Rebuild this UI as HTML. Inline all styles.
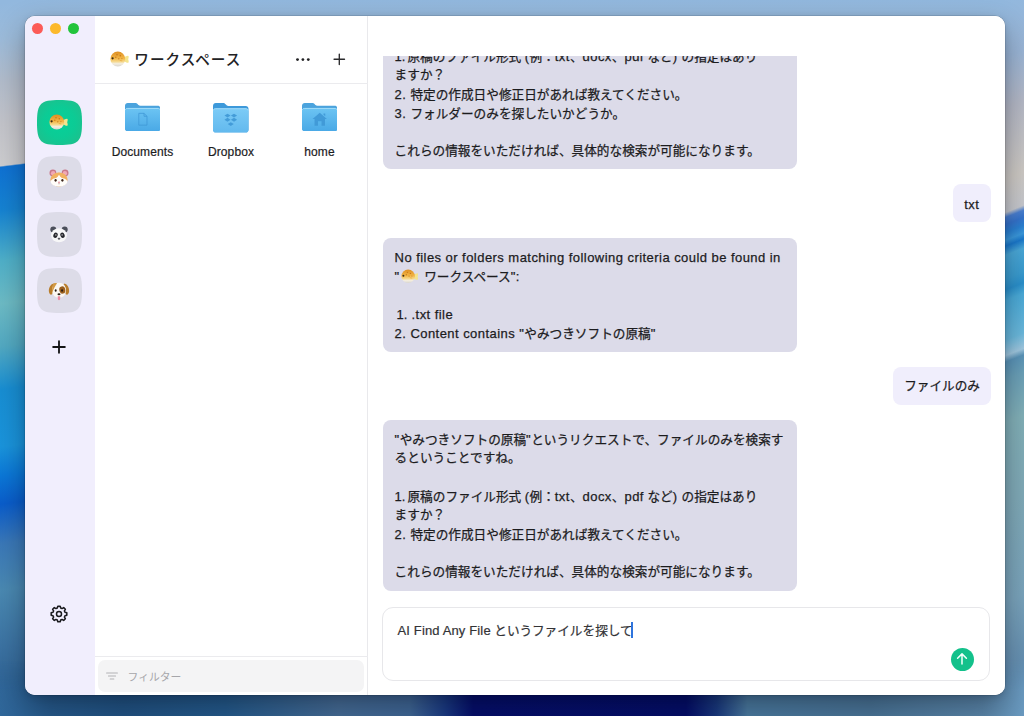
<!DOCTYPE html>
<html lang="ja">
<head>
<meta charset="utf-8">
<title>ワークスペース</title>
<style>
html,body{margin:0;padding:0;}
body{width:1024px;height:716px;overflow:hidden;position:relative;background:#3a6a98;
  font-family:"Liberation Sans","Noto Sans CJK JP",sans-serif;color:#1c1c1e;}
#wall{position:absolute;left:0;top:0;width:1024px;height:716px;display:block;}
#win{position:absolute;left:25px;top:16px;width:980px;height:679px;border-radius:10px;background:#fff;
  box-shadow:0 0 0 0.5px rgba(0,0,0,.18),0 12px 30px rgba(0,0,10,.32),0 2px 7px rgba(0,0,20,.13);overflow:hidden;}
#side{position:absolute;left:0;top:0;width:69.5px;height:679px;background:#f1eefd;}
.tl{position:absolute;top:6.5px;width:11.2px;height:11.2px;border-radius:50%;}
.wsb{position:absolute;left:11.5px;width:45px;height:45px;}
.wsb .sq{position:absolute;left:0;top:0;width:45px;height:45px;}
.wsb .emo{position:absolute;}
#panel{position:absolute;left:69.5px;top:0;width:272.5px;height:679px;background:#fff;border-right:1px solid #e9e9ec;}
#phead{position:absolute;left:0;top:0;width:273px;height:67px;border-bottom:1px solid #ebebee;}
#ptitle{position:absolute;left:39.8px;top:33.2px;font-size:14.6px;line-height:22px;font-weight:500;color:#222224;white-space:nowrap;letter-spacing:1px;}
.fold{position:absolute;top:87.4px;width:80px;text-align:center;}
.fold svg{display:block;margin:0 auto;width:35.5px;height:28.6px;}
.fold span{display:block;margin-top:13.1px;font-size:12px;line-height:14px;color:#1c1c1e;-webkit-text-stroke:0.2px #1c1c1e;white-space:nowrap;letter-spacing:.1px;}
#filter{position:absolute;left:3.6px;top:643.6px;width:266px;height:32.8px;border-radius:7px;background:#f4f4f5;}
#filter span{position:absolute;left:29.5px;top:9px;font-size:10.8px;line-height:16px;color:#a6a6aa;}
#fline{position:absolute;left:0;top:639.5px;width:273px;height:1px;background:#ebebee;}
#chat{position:absolute;left:343px;top:0;width:637px;height:679px;background:#fff;}
#scroll{position:absolute;left:0;top:39.5px;width:637px;height:551.5px;overflow:hidden;}
.ab{position:absolute;left:14.8px;width:414px;box-sizing:border-box;padding:10px 12px 8.5px 11.8px;border-radius:8px;background:#dcdbe9;
  font-size:12.65px;line-height:19px;color:#1c1c1e;white-space:nowrap;-webkit-text-stroke:.25px #1c1c1e;}
.ub{position:absolute;right:14.4px;box-sizing:border-box;height:38.2px;padding:10.5px 10.6px 0 10.8px;border-radius:8px;background:#f0eefc;
  font-size:12.65px;line-height:19px;color:#1c1c1e;white-space:nowrap;-webkit-text-stroke:.25px #1c1c1e;}
.ab div,.ub div{height:19px;}
#input{position:absolute;left:14.3px;top:590.5px;width:607.4px;height:74px;border:1px solid #e7e7ea;border-radius:11px;background:#fff;box-sizing:border-box;}
#itext{position:absolute;left:14.2px;top:13.6px;font-size:12.65px;line-height:19px;color:#333336;white-space:nowrap;-webkit-text-stroke:.2px #333336;}
#caret{position:absolute;left:248.2px;top:14.8px;width:1.5px;height:16px;background:#2f74dd;}
#send{position:absolute;left:567.5px;top:40.1px;width:23.4px;height:23.4px;border-radius:50%;background:#13c18b;}
.l{font-size:13px;letter-spacing:.45px;}
.n{font-size:13px;letter-spacing:0;word-spacing:-1.6px;}
.l2{font-size:13px;letter-spacing:.14px;}
.em{display:inline-block;vertical-align:-2.5px;width:17.4px;height:14.6px;margin:0 2.6px 0 1px;}
</style>
</head>
<body>
<svg id="wall" viewBox="0 0 1024 716" aria-hidden="true">
  <defs>
    <linearGradient id="gl" x1="0" y1="0" x2="0" y2="716" gradientUnits="userSpaceOnUse" gradientTransform="matrix(1 -0.12 0 1 0 3)">
      <stop offset="0" stop-color="#92b8de"/>
      <stop offset="0.05" stop-color="#9cbbda"/>
      <stop offset="0.11" stop-color="#b2bccb"/>
      <stop offset="0.17" stop-color="#c3c4ca"/>
      <stop offset="0.2275" stop-color="#cdcdd0"/>
      <stop offset="0.2295" stop-color="#0f72d4"/>
      <stop offset="0.29" stop-color="#1683d2"/>
      <stop offset="0.36" stop-color="#4fb0c9"/>
      <stop offset="0.42" stop-color="#6dbbc5"/>
      <stop offset="0.48" stop-color="#52a9c2"/>
      <stop offset="0.54" stop-color="#188ed3"/>
      <stop offset="0.62" stop-color="#1a94dc"/>
      <stop offset="0.66" stop-color="#0b78d8"/>
      <stop offset="0.70" stop-color="#0a5dcb"/>
      <stop offset="0.755" stop-color="#3a78b8"/>
      <stop offset="0.82" stop-color="#4a89b2"/>
      <stop offset="0.90" stop-color="#3b72a2"/>
      <stop offset="1" stop-color="#285888"/>
    </linearGradient>
    <linearGradient id="gr" x1="0" y1="0" x2="0" y2="716" gradientUnits="userSpaceOnUse" gradientTransform="matrix(1 -0.4 0 1 0 402)">
      <stop offset="0" stop-color="#92b8de"/>
      <stop offset="0.08" stop-color="#9ab5d6"/>
      <stop offset="0.15" stop-color="#b4b8c6"/>
      <stop offset="0.25" stop-color="#cdc9c4"/>
      <stop offset="0.297" stop-color="#c6c8ce"/>
      <stop offset="0.304" stop-color="#4a7fd0"/>
      <stop offset="0.314" stop-color="#3573cc"/>
      <stop offset="0.325" stop-color="#2a80d2"/>
      <stop offset="0.336" stop-color="#3a98dc"/>
      <stop offset="0.344" stop-color="#1a78cc"/>
      <stop offset="0.357" stop-color="#4aa8d8"/>
      <stop offset="0.39" stop-color="#3a9cd0"/>
      <stop offset="0.405" stop-color="#2a90cc"/>
      <stop offset="0.42" stop-color="#4aaad8"/>
      <stop offset="0.475" stop-color="#6ab8dc"/>
      <stop offset="0.497" stop-color="#a0c8e0"/>
      <stop offset="0.506" stop-color="#5a94b8"/>
      <stop offset="0.53" stop-color="#6aa0b8"/>
      <stop offset="0.59" stop-color="#82b0b8"/>
      <stop offset="0.70" stop-color="#80aab8"/>
      <stop offset="0.84" stop-color="#7aa4bc"/>
      <stop offset="0.91" stop-color="#6a94b4"/>
      <stop offset="1" stop-color="#5a88b0"/>
    </linearGradient>
    <linearGradient id="gb" x1="0" y1="0" x2="1024" y2="0" gradientUnits="userSpaceOnUse">
      <stop offset="0" stop-color="#30679a"/>
      <stop offset="0.05" stop-color="#265a8c"/>
      <stop offset="0.12" stop-color="#215384"/>
      <stop offset="0.22" stop-color="#245a8c"/>
      <stop offset="0.33" stop-color="#456c96"/>
      <stop offset="0.40" stop-color="#3f6796"/>
      <stop offset="0.435" stop-color="#1a3a84"/>
      <stop offset="0.462" stop-color="#050f6c"/>
      <stop offset="0.67" stop-color="#040e6a"/>
      <stop offset="0.70" stop-color="#1a3a80"/>
      <stop offset="0.73" stop-color="#4a7aa0"/>
      <stop offset="0.85" stop-color="#4a7598"/>
      <stop offset="0.96" stop-color="#5a86aa"/>
      <stop offset="1" stop-color="#6a9ac0"/>
    </linearGradient>
    <linearGradient id="gt" x1="0" y1="0" x2="0" y2="716" gradientUnits="userSpaceOnUse"><stop offset="0" stop-color="#92b8de"/><stop offset="0.05" stop-color="#9cbbda"/><stop offset="1" stop-color="#9cbbda"/></linearGradient>
    <linearGradient id="gbm" x1="0" y1="660" x2="0" y2="716" gradientUnits="userSpaceOnUse">
      <stop offset="0" stop-color="#fff" stop-opacity="0"/>
      <stop offset="0.55" stop-color="#fff" stop-opacity="1"/>
      <stop offset="1" stop-color="#fff" stop-opacity="1"/>
    </linearGradient>
    <mask id="mb"><rect x="0" y="640" width="1024" height="76" fill="url(#gbm)"/></mask>
  </defs>
  <rect x="0" y="0" width="1024" height="716" fill="url(#gt)"/>
  <rect x="0" y="0" width="60" height="716" fill="url(#gl)"/>
  <rect x="1000" y="0" width="24" height="716" fill="url(#gr)"/>
  <rect x="0" y="640" width="1024" height="76" fill="url(#gb)" mask="url(#mb)"/>
</svg>

<div id="win">
  <div id="side">
    <div class="tl" style="left:6.9px;background:#fc5b57;"></div>
    <div class="tl" style="left:25.1px;background:#fcb92c;"></div>
    <div class="tl" style="left:43.1px;background:#23c43c;"></div>
    <div class="wsb" style="top:83.5px;"><svg class="sq" viewBox="0 0 45 45"><defs><radialGradient id="gbt" cx=".5" cy=".5" r=".62"><stop offset="0" stop-color="#05d19a"/><stop offset=".55" stop-color="#0ccb95"/><stop offset="1" stop-color="#1fbf8c"/></radialGradient></defs><path d="M0 22.5C0 3.4 3.4 0 22.5 0S45 3.4 45 22.5 41.6 45 22.5 45 0 41.6 0 22.5Z" fill="url(#gbt)"/></svg><svg class="emo" style="left:12.7px;top:14.6px;width:19px;height:16px" viewBox="0 0 19 16" role="img" aria-label="🐡"><defs><linearGradient id="fbg1" x1="0" y1="0" x2="0" y2="1"><stop offset="0" stop-color="#de8f22"/><stop offset=".45" stop-color="#f2b545"/><stop offset=".68" stop-color="#f6d98e"/><stop offset=".82" stop-color="#f3eee2"/><stop offset="1" stop-color="#d9d5cb"/></linearGradient></defs><path d="M14 6.2C15.6 5.5 17.6 4.3 18.4 4.9C19.1 5.5 18.5 7.2 18.2 8.3C18.6 9.5 19 11.1 18.3 11.7C17.5 12.3 15.6 11.2 14 10.3Z" fill="#f4e38c"/><circle cx="7.8" cy="8" r="7.4" fill="url(#fbg1)"/><circle cx="2.6" cy="7.3" r="1.1" fill="#3b2a14"/><circle cx="7" cy="3.7" r=".8" fill="#c9781a"/><circle cx="10.3" cy="4.8" r=".8" fill="#c9781a"/><circle cx="5.8" cy="6.3" r=".7" fill="#c9781a"/><circle cx="8.8" cy="7.8" r=".7" fill="#cf8424"/><circle cx="11.9" cy="7.6" r=".6" fill="#cf8424"/><path d="M9.3 9.6C10.6 8.9 12 9.1 12.7 10.1C11.7 10.4 10.3 10.4 9.3 9.6Z" fill="#eaa93c"/></svg></div>
    <div class="wsb" style="top:139.6px;"><svg class="sq" viewBox="0 0 45 45"><path d="M0 22.5C0 3.4 3.4 0 22.5 0S45 3.4 45 22.5 41.6 45 22.5 45 0 41.6 0 22.5Z" fill="#dddce8"/></svg><svg class="emo" style="left:12.5px;top:13px;width:20px;height:18px" viewBox="0 0 20 18" role="img" aria-label="🐹"><circle cx="3.9" cy="4" r="3.4" fill="#c9788a"/><circle cx="16.1" cy="4" r="3.4" fill="#c9788a"/><circle cx="4.1" cy="4.3" r="2.2" fill="#f0a9b6"/><circle cx="15.9" cy="4.3" r="2.2" fill="#f0a9b6"/><ellipse cx="10" cy="10.6" rx="8.6" ry="7" fill="#f1b262"/><path d="M10 5.5C8.5 7.5 7.6 9 6.2 9.3C3.3 9.9 1.5 11.3 1.7 12.8C2.2 15.8 5.8 17.5 10 17.5S17.8 15.8 18.3 12.8C18.5 11.3 16.7 9.9 13.8 9.3C12.4 9 11.5 7.5 10 5.5Z" fill="#fffdf9"/><path d="M10 3.7C12.6 3.7 15 4.7 16.6 6.3C15.5 8 13.5 9 12.5 8.5C11.5 8 10.8 6.5 10 5.5C9.2 6.5 8.5 8 7.5 8.5C6.5 9 4.5 8 3.4 6.3C5 4.7 7.4 3.7 10 3.7Z" fill="#f1b262"/><ellipse cx="6.6" cy="11.3" rx="1.1" ry="1.350" fill="#3a2418"/><ellipse cx="13.4" cy="11.3" rx="1.1" ry="1.350" fill="#3a2418"/><ellipse cx="10" cy="13.3" rx="1" ry=".7" fill="#e58a9a"/><path d="M10 14V15.3" stroke="#8a5a4a" stroke-width=".6" fill="none"/></svg></div>
    <div class="wsb" style="top:196px;"><svg class="sq" viewBox="0 0 45 45"><path d="M0 22.5C0 3.4 3.4 0 22.5 0S45 3.4 45 22.5 41.6 45 22.5 45 0 41.6 0 22.5Z" fill="#dddce8"/></svg><svg class="emo" style="left:13.5px;top:14px;width:18px;height:16.5px" viewBox="0 0 18 16.5" role="img" aria-label="🐼"><circle cx="3.3" cy="3.4" r="3" fill="#4b4f5a"/><circle cx="14.7" cy="3.4" r="3" fill="#4b4f5a"/><ellipse cx="9" cy="9.2" rx="7.9" ry="7" fill="#f7f7f8"/><ellipse cx="5.5" cy="9.3" rx="2.1" ry="2.7" transform="rotate(22 5.5 9.3)" fill="#26272c"/><ellipse cx="12.5" cy="9.3" rx="2.1" ry="2.7" transform="rotate(-22 12.5 9.3)" fill="#26272c"/><circle cx="5.9" cy="8.9" r=".6" fill="#fff"/><circle cx="12.1" cy="8.9" r=".6" fill="#fff"/><path d="M7.9 12.2H10.1L9 13.7Z" fill="#33343a" stroke="#33343a" stroke-width=".5" stroke-linejoin="round"/></svg></div>
    <div class="wsb" style="top:252.4px;"><svg class="sq" viewBox="0 0 45 45"><path d="M0 22.5C0 3.4 3.4 0 22.5 0S45 3.4 45 22.5 41.6 45 22.5 45 0 41.6 0 22.5Z" fill="#dddce8"/></svg><svg class="emo" style="left:11.5px;top:13.5px;width:22px;height:19px" viewBox="0 0 22 19" role="img" aria-label="🐶"><path d="M5.5 1.5C2.5 2.3.5 6 .900 9.5 1.2 12 2.7 13.3 4 12.3 5.3 11.2 5 7 7.3 3.3Z" fill="#b97d2b"/><path d="M16.5 1.5C19.5 2.3 21.5 6 21.1 9.5 20.8 12 19.3 13.3 18 12.3 16.7 11.2 17 7 14.7 3.3Z" fill="#b97d2b"/><path d="M11 .8C15 .8 18 3.8 18 8.3 18 12.8 15 15.8 11 15.8S4 12.8 4 8.3C4 3.8 7 .8 11 .8Z" fill="#fbf8f2"/><path d="M5.5 1.5C7 .9 8.5 1 9 1.3 7.5 3.5 5.3 7 4.3 11 3.9 9.5 3.9 4 5.5 1.5Z" fill="#d29a45"/><ellipse cx="14.3" cy="8" rx="3" ry="3.7" transform="rotate(-12 14.3 8)" fill="#9a5f1e"/><ellipse cx="7.7" cy="8.6" rx=".95" ry="1.250" fill="#2a1c12"/><ellipse cx="14.1" cy="8.6" rx=".95" ry="1.250" fill="#2a1c12"/><ellipse cx="11" cy="12.2" rx="1.5" ry="1.050" fill="#2a1c12"/><path d="M9.8 14.3H12.2V16.5C12.2 17.5 11.7 18.2 11 18.2S9.8 17.5 9.8 16.5Z" fill="#f08aa0"/></svg></div>
    <svg style="position:absolute;left:27.1px;top:324.3px;width:14px;height:14px" viewBox="0 0 16 16"><path d="M8 1.3V14.7M1.3 8H14.7" stroke="#141416" stroke-width="2.1" stroke-linecap="round" fill="none"/></svg>
    <svg style="position:absolute;left:24.1px;top:587.8px;width:20px;height:20px" viewBox="0 0 20 20"><path d="M8.32 4.03 L8.83 2.19 L11.17 2.19 L11.68 4.03 L13.03 4.59 L14.69 3.65 L16.35 5.31 L15.41 6.97 L15.97 8.32 L17.81 8.83 L17.81 11.17 L15.97 11.68 L15.41 13.03 L16.35 14.69 L14.69 16.35 L13.03 15.41 L11.68 15.97 L11.17 17.81 L8.83 17.81 L8.32 15.97 L6.97 15.41 L5.31 16.35 L3.65 14.69 L4.59 13.03 L4.03 11.68 L2.19 11.17 L2.19 8.83 L4.03 8.32 L4.59 6.97 L3.65 5.31 L5.31 3.65 L6.97 4.59Z" fill="none" stroke="#1b1b1f" stroke-width="1.550" stroke-linejoin="round"/><circle cx="10" cy="10" r="2.5" fill="none" stroke="#1b1b1f" stroke-width="1.5"/></svg>
  </div>

  <div id="panel">
    <div id="phead">
      <svg class="hf" style="position:absolute;left:15.6px;top:35px;width:19px;height:16px" viewBox="0 0 19 16" role="img" aria-label="🐡"><defs><linearGradient id="fbg2" x1="0" y1="0" x2="0" y2="1"><stop offset="0" stop-color="#de8f22"/><stop offset=".45" stop-color="#f2b545"/><stop offset=".68" stop-color="#f6d98e"/><stop offset=".82" stop-color="#f3eee2"/><stop offset="1" stop-color="#d9d5cb"/></linearGradient></defs><path d="M14 6.2C15.6 5.5 17.6 4.3 18.4 4.9C19.1 5.5 18.5 7.2 18.2 8.3C18.6 9.5 19 11.1 18.3 11.7C17.5 12.3 15.6 11.2 14 10.3Z" fill="#f4e38c"/><circle cx="7.8" cy="8" r="7.4" fill="url(#fbg2)"/><circle cx="2.6" cy="7.3" r="1.1" fill="#3b2a14"/><circle cx="7" cy="3.7" r=".8" fill="#c9781a"/><circle cx="10.3" cy="4.8" r=".8" fill="#c9781a"/><circle cx="5.8" cy="6.3" r=".7" fill="#c9781a"/><circle cx="8.8" cy="7.8" r=".7" fill="#cf8424"/><circle cx="11.9" cy="7.6" r=".6" fill="#cf8424"/><path d="M9.3 9.6C10.6 8.9 12 9.1 12.7 10.1C11.7 10.4 10.3 10.4 9.3 9.6Z" fill="#eaa93c"/></svg>
      <div id="ptitle">ワークスペース</div>
      <svg style="position:absolute;left:199.6px;top:40px;width:18px;height:8px" viewBox="0 0 18 8"><circle cx="3.5" cy="3.6" r="1.4" fill="#222224"/><circle cx="8.9" cy="3.6" r="1.4" fill="#222224"/><circle cx="14.3" cy="3.6" r="1.4" fill="#222224"/></svg>
      <svg style="position:absolute;left:238.6px;top:37.1px;width:12.6px;height:12.6px" viewBox="0 0 14 14"><path d="M7 1.2V12.8M1.2 7H12.8" stroke="#2a2a2c" stroke-width="1.5" stroke-linecap="round" fill="none"/></svg>
    </div>
    <div class="fold" style="left:8px;"><svg viewBox="0 0 36 29"><defs><linearGradient id="fg1" x1="0" y1="0" x2="0" y2="1"><stop offset="0" stop-color="#6cc4f3"/><stop offset="1" stop-color="#4aa9e6"/></linearGradient></defs><path d="M0 2.8C0 1.2 1.2 0 2.8 0H10.2C11.4 0 12 .4 12.7 1.1L13.6 2C14.2 2.6 14.7 2.8 15.6 2.8H33.2C34.8 2.8 36 4 36 5.6V25.5C36 27.1 34.8 28.3 33.2 28.3H2.8C1.2 28.3 0 27.1 0 25.5Z" fill="#4ba3dd"/><path d="M0 7.5C0 6.2 1 5.2 2.3 5.2H33.7C35 5.2 36 6.2 36 7.5V26C36 27.4 34.9 28.5 33.5 28.5H2.5C1.1 28.5 0 27.4 0 26Z" fill="url(#fg1)"/><path d="M.3 7.2C.5 6.2 1.3 5.5 2.3 5.5H33.7C34.7 5.5 35.5 6.2 35.7 7.2" fill="none" stroke="#a9e0fb" stroke-width=".9"/><path d="M14 10.5H19.3L22.3 13.5V22.5H14Z" fill="none" stroke="#3f98d6" stroke-width=".9" stroke-linejoin="round" opacity=".85"/><path d="M19.3 10.5V13.5H22.3" fill="none" stroke="#3f98d6" stroke-width=".9" stroke-linejoin="round" opacity=".85"/></svg><span>Documents</span></div>
    <div class="fold" style="left:96.5px;"><svg viewBox="0 0 36 29" preserveAspectRatio="none" style="height:30px;margin-bottom:-1.4px"><defs><linearGradient id="fg2" x1="0" y1="0" x2="0" y2="1"><stop offset="0" stop-color="#7ccbf6"/><stop offset="1" stop-color="#62b9ee"/></linearGradient></defs><path d="M0 2.8C0 1.2 1.2 0 2.8 0H10.2C11.4 0 12 .4 12.7 1.1L13.6 2C14.2 2.6 14.7 2.8 15.6 2.8H33.2C34.8 2.8 36 4 36 5.6V25.5C36 27.1 34.8 28.3 33.2 28.3H2.8C1.2 28.3 0 27.1 0 25.5Z" fill="#3d99da"/><path d="M0 7.5C0 6.2 1 5.2 2.3 5.2H33.7C35 5.2 36 6.2 36 7.5V26C36 27.4 34.9 28.5 33.5 28.5H2.5C1.1 28.5 0 27.4 0 26Z" fill="url(#fg2)"/><path d="M.3 7.2C.5 6.2 1.3 5.5 2.3 5.5H33.7C34.7 5.5 35.5 6.2 35.7 7.2" fill="none" stroke="#a9e0fb" stroke-width=".9"/><g fill="#3f98d6" opacity=".9"><path d="M14.7 10.3L17.8 12.2 14.7 14.1 11.6 12.2Z" transform="translate(0 0)"/><path d="M21.3 10.3L24.4 12.2 21.3 14.1 18.2 12.2Z"/><path d="M14.7 14.3L17.8 16.2 14.7 18.1 11.6 16.2Z"/><path d="M21.3 14.3L24.4 16.2 21.3 18.1 18.2 16.2Z"/><path d="M18 18.5L21.1 20.4 18 22.3 14.9 20.4Z"/></g></svg><span>Dropbox</span></div>
    <div class="fold" style="left:185px;"><svg viewBox="0 0 36 29"><defs><linearGradient id="fg3" x1="0" y1="0" x2="0" y2="1"><stop offset="0" stop-color="#6cc4f3"/><stop offset="1" stop-color="#4aa9e6"/></linearGradient></defs><path d="M0 2.8C0 1.2 1.2 0 2.8 0H10.2C11.4 0 12 .4 12.7 1.1L13.6 2C14.2 2.6 14.7 2.8 15.6 2.8H33.2C34.8 2.8 36 4 36 5.6V25.5C36 27.1 34.8 28.3 33.2 28.3H2.8C1.2 28.3 0 27.1 0 25.5Z" fill="#4ba3dd"/><path d="M0 7.5C0 6.2 1 5.2 2.3 5.2H33.7C35 5.2 36 6.2 36 7.5V26C36 27.4 34.9 28.5 33.5 28.5H2.5C1.1 28.5 0 27.4 0 26Z" fill="url(#fg3)"/><path d="M.3 7.2C.5 6.2 1.3 5.5 2.3 5.5H33.7C34.7 5.5 35.5 6.2 35.7 7.2" fill="none" stroke="#a9e0fb" stroke-width=".9"/><g fill="#3f98d6" opacity=".9"><path d="M18 9.8L25.3 16.3H23.3V23H19.8V18.6H16.2V23H12.7V16.3H10.7Z"/><path d="M21.8 10.6H23.6V13.5L21.8 12Z"/></g></svg><span>home</span></div>
    <div id="fline"></div>
    <div id="filter"><svg style="position:absolute;left:8px;top:12.4px;width:12px;height:8.3px" viewBox="0 0 13 9"><path d="M.6 1.2H12.4M2.6 4.4H10.4M4.5 7.6H8.5" stroke="#b2b2b6" stroke-width="1.1" stroke-linecap="round" fill="none"/></svg><span>フィルター</span></div>
  </div>

  <div id="chat">
    <div id="scroll">
      <div class="ab" style="top:-19px;">
        <div><span class="n">1. </span>原稿のファイル形式 <span class="l">(</span>例：<span class="l">txt</span>、<span class="l">docx</span>、<span class="l">pdf</span> など<span class="l">) </span>の指定はあり</div>
        <div>ますか？</div>
        <div><span class="l">2. </span>特定の作成日や修正日があれば教えてください。</div>
        <div><span class="l">3. </span>フォルダーのみを探したいかどうか。</div>
        <div></div>
        <div>これらの情報をいただければ、具体的な検索が可能になります。</div>
      </div>
      <div class="ub" style="top:128.6px;padding-right:11.4px;"><div><span class="l">txt</span></div></div>
      <div class="ab" style="top:182.5px;">
        <div><span class="l">No files or folders matching following criteria could be found in</span></div>
        <div><span class="l">"</span><svg class="em" style="" viewBox="0 0 19 16" role="img" aria-label="🐡"><defs><linearGradient id="fbg3" x1="0" y1="0" x2="0" y2="1"><stop offset="0" stop-color="#de8f22"/><stop offset=".45" stop-color="#f2b545"/><stop offset=".68" stop-color="#f6d98e"/><stop offset=".82" stop-color="#f3eee2"/><stop offset="1" stop-color="#d9d5cb"/></linearGradient></defs><path d="M14 6.2C15.6 5.5 17.6 4.3 18.4 4.9C19.1 5.5 18.5 7.2 18.2 8.3C18.6 9.5 19 11.1 18.3 11.7C17.5 12.3 15.6 11.2 14 10.3Z" fill="#f4e38c"/><circle cx="7.8" cy="8" r="7.4" fill="url(#fbg3)"/><circle cx="2.6" cy="7.3" r="1.1" fill="#3b2a14"/><circle cx="7" cy="3.7" r=".8" fill="#c9781a"/><circle cx="10.3" cy="4.8" r=".8" fill="#c9781a"/><circle cx="5.8" cy="6.3" r=".7" fill="#c9781a"/><circle cx="8.8" cy="7.8" r=".7" fill="#cf8424"/><circle cx="11.9" cy="7.6" r=".6" fill="#cf8424"/><path d="M9.3 9.6C10.6 8.9 12 9.1 12.7 10.1C11.7 10.4 10.3 10.4 9.3 9.6Z" fill="#eaa93c"/></svg> ワークスペース<span class="l">":</span></div>
        <div></div>
        <div><span class="n">&nbsp;1.</span><span class="l"> .txt file</span></div>
        <div><span class="l">2. Content contains "</span>やみつきソフトの原稿<span class="l">"</span></div>
      </div>
      <div class="ub" style="top:311px;"><div>ファイルのみ</div></div>
      <div class="ab" style="top:364.9px;">
        <div><span class="l">"</span>やみつきソフトの原稿<span class="l">"</span>というリクエストで、ファイルのみを検索す</div>
        <div>るということですね。</div>
        <div></div>
        <div><span class="n">1. </span>原稿のファイル形式 <span class="l">(</span>例：<span class="l">txt</span>、<span class="l">docx</span>、<span class="l">pdf</span> など<span class="l">) </span>の指定はあり</div>
        <div>ますか？</div>
        <div><span class="l">2. </span>特定の作成日や修正日があれば教えてください。</div>
        <div></div>
        <div>これらの情報をいただければ、具体的な検索が可能になります。</div>
      </div>
    </div>
    <div id="input">
      <div id="itext"><span class="l2">AI Find Any File</span> というファイルを探して</div>
      <div id="caret"></div>
      <div id="send"><svg style="position:absolute;left:4.6px;top:4.3px;width:14px;height:14px" viewBox="0 0 14 14"><path d="M7 12V2.2M2.6 6.3L7 1.9L11.4 6.3" stroke="#f2fffa" stroke-width="1.5" stroke-linecap="round" stroke-linejoin="round" fill="none"/></svg></div>
    </div>
  </div>
</div>
</body>
</html>
